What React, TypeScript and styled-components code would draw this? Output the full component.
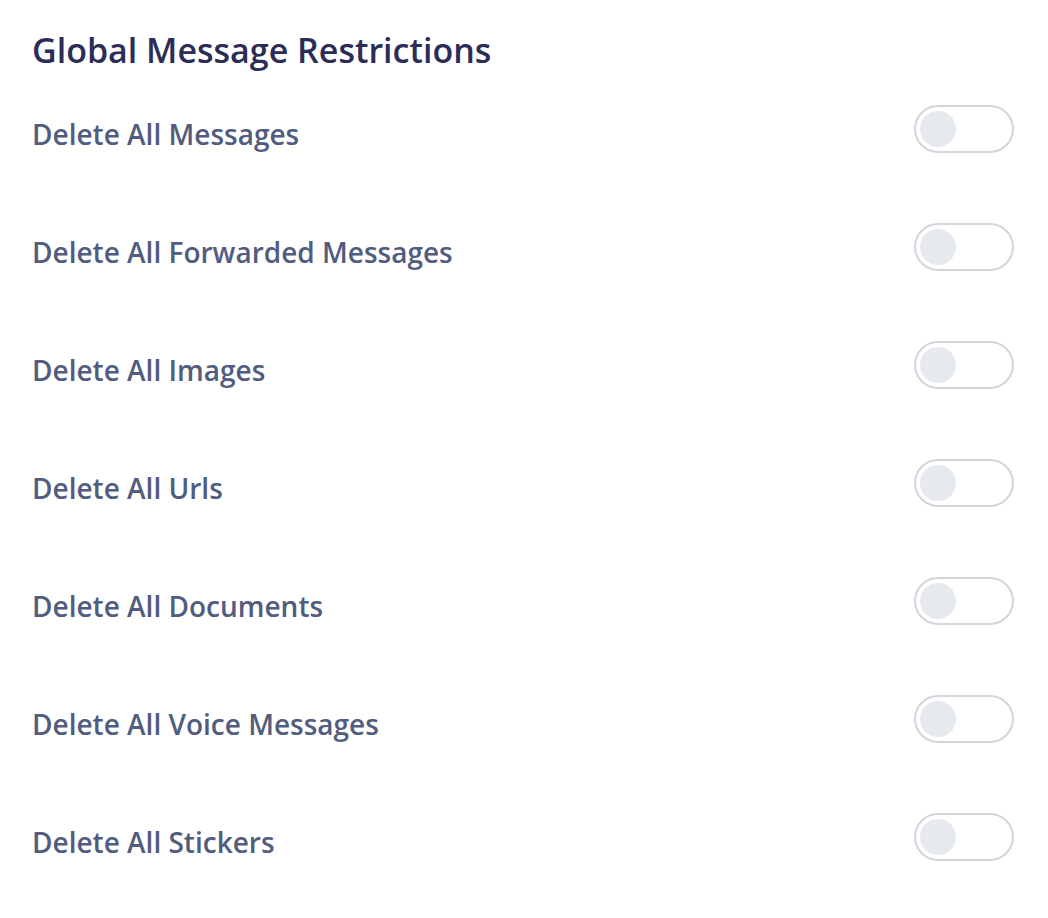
import styled, { createGlobalStyle } from "styled-components";
import { useState } from "react";

const GlobalStyle = createGlobalStyle`
  body {
    margin: 0;
    background: #ffffff;
    font-family: "Open Sans", "Noto Sans", sans-serif;
  }
`;

const Wrapper = styled.div`
  padding: 28px 34px 0 32px;
`;

const Title = styled.h2`
  margin: 0 0 10px;
  font-size: 34px;
  font-weight: 600;
  color: #2b2d57;
  line-height: 44px;
`;

const List = styled.div`
  margin-top: -12px;
`;

const Row = styled.div`
  display: flex;
  align-items: center;
  justify-content: space-between;
  height: 118px;
`;

const Label = styled.span`
  font-size: 28px;
  font-weight: 600;
  color: #515c7e;
  margin-top: 9px;
`;

const Switch = styled.button<{ on: boolean }>`
  position: relative;
  width: 100px;
  height: 48px;
  border-radius: 24px;
  border: 2px solid #d2d5db;
  background: ${(props) => (props.on ? "#4f5fd6" : "#ffffff")};
  padding: 0;
  cursor: pointer;
`;

const Knob = styled.span<{ on: boolean }>`
  position: absolute;
  top: 4px;
  left: ${(props) => (props.on ? "56px" : "4px")};
  width: 36px;
  height: 36px;
  border-radius: 50%;
  background: #e6e9ed;
  transition: left 0.2s;
`;

const items = [
  "Delete All Messages",
  "Delete All Forwarded Messages",
  "Delete All Images",
  "Delete All Urls",
  "Delete All Documents",
  "Delete All Voice Messages",
  "Delete All Stickers",
];

function App() {
  const [checked, setChecked] = useState<boolean[]>(items.map(() => false));
  const toggle = (i: number) =>
    setChecked((prev) => prev.map((v, idx) => (idx === i ? !v : v)));
  return (
    <Wrapper>
      <GlobalStyle />
      <Title>Global Message Restrictions</Title>
      <List>
        {items.map((item, i) => (
          <Row key={item}>
            <Label>{item}</Label>
            <Switch on={checked[i]} onClick={() => toggle(i)}>
              <Knob on={checked[i]} />
            </Switch>
          </Row>
        ))}
      </List>
    </Wrapper>
  );
}

export default App;
